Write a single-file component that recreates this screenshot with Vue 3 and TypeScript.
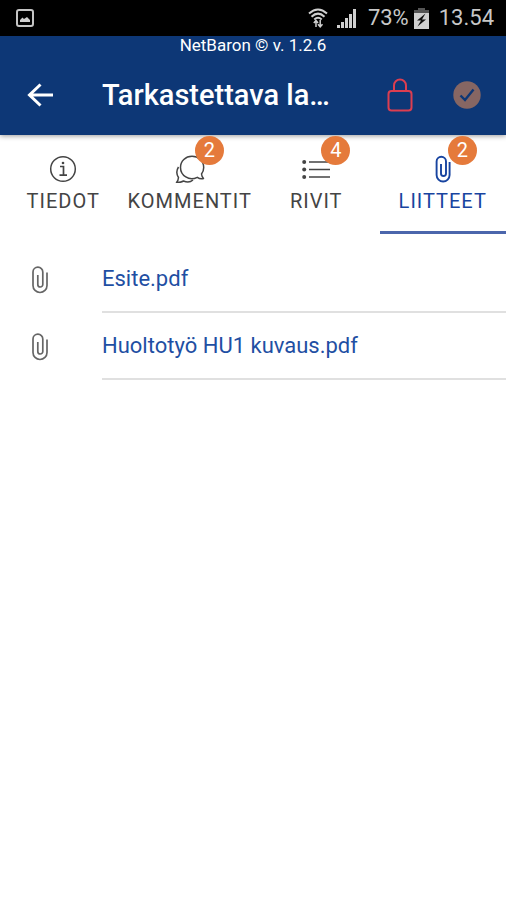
<script setup lang="ts">
import { ref } from 'vue'

type TabIcon = 'info' | 'chat' | 'list' | 'clip'

interface Tab {
  label: string
  icon: TabIcon
  count?: number
}

const tabs: Tab[] = [
  { label: 'Tiedot', icon: 'info' },
  { label: 'Kommentit', icon: 'chat', count: 2 },
  { label: 'Rivit', icon: 'list', count: 4 },
  { label: 'Liitteet', icon: 'clip', count: 2 },
]
const activeTab = ref<TabIcon>('clip')
const files: string[] = ['Esite.pdf', 'Huoltotyö HU1 kuvaus.pdf']
</script>

<template>
  <div class="screen">
    <div class="status">
      <svg class="picture" viewBox="0 0 18 18" aria-hidden="true">
        <rect x="1" y="1" width="16" height="16" rx="2" fill="none" stroke="#c4c4c4" stroke-width="2" />
        <path d="M4 13V11L6.500 8.500L8 10L11 8L14 11V13Z" fill="#d0d0d0" />
      </svg>
      <svg class="wifi" viewBox="0 0 20 20" aria-hidden="true">
        <g fill="none" stroke="#d0d0d0">
          <path d="M1 5.500Q10-2.500 19 5.500M3.500 8.700Q10 2.500 16.500 8.700M6.300 11.500Q10 8 13.700 11.500" stroke-width="2" />
          <path d="M8 19V12.500M5.800 15L8 12.500L10 15M12.200 12V18.500M10 16.200L12.200 18.800L14.500 16.200" stroke-width="1.500" />
        </g>
      </svg>
      <svg class="signal" viewBox="0 0 19 19" aria-hidden="true">
        <path d="M0 16h3v3H0zM4 13h3v6H4zM8 9h3v10H8zM12 5h3v14h-3zM16 0h3v19h-3z" fill="#d0d0d0" />
      </svg>
      <span>73%</span>
      <svg class="battery" viewBox="0 0 15 21" aria-hidden="true">
        <path d="M4 0h7v2h4v3H0V2h4z" fill="#555" />
        <path d="M0 5h15v16H0z" fill="#d0d0d0" />
        <path d="M11.500 5.500L3 12.500H7L3.500 18.500L12 11.500H8z" fill="#111" />
      </svg>
      <span>13.54</span>
    </div>

    <header class="header">
      <div class="version">NetBaron © v. 1.2.6</div>
      <div class="toolbar">
        <button class="back" type="button" aria-label="Takaisin">
          <svg viewBox="0 0 26 24" aria-hidden="true">
            <path d="M26 12H2.500M13.500 1.500L2.500 12L13.500 22.500" fill="none" stroke="#fff" stroke-width="3" />
          </svg>
        </button>
        <h1>Tarkastettava la…</h1>
        <button class="lock" type="button" aria-label="Lukitse">
          <svg viewBox="0 0 26 34" aria-hidden="true">
            <g fill="none" stroke="#dc3e50" stroke-width="2">
              <rect x="1.500" y="13" width="23" height="19.500" rx="3" />
              <path d="M7 13V7.500A6 6 0 0 1 19 7.500V13" />
            </g>
          </svg>
        </button>
        <button class="approve" type="button" aria-label="Hyväksy">
          <svg viewBox="0 0 28 28" aria-hidden="true">
            <circle cx="14" cy="14" r="13.700" fill="#866663" />
            <path d="M7.500 14.500L12 19L20.500 8.500" fill="none" stroke="#0d3776" stroke-width="2.400" />
          </svg>
        </button>
      </div>
    </header>

    <nav class="tabs" role="tablist">
      <button
        v-for="tab in tabs"
        :key="tab.icon"
        class="tab"
        :class="{ active: tab.icon === activeTab }"
        type="button"
        role="tab"
        :aria-selected="tab.icon === activeTab"
        @click="activeTab = tab.icon"
      >
        <span class="glyph">
          <svg v-if="tab.icon === 'info'" viewBox="0 0 30 28" aria-hidden="true">
            <circle cx="15" cy="14" r="12.300" fill="none" stroke="currentColor" stroke-width="1.500" />
            <path d="M12 11.500H15.500V20M11.500 20.200H19" fill="none" stroke="currentColor" stroke-width="1.700" />
            <circle cx="15" cy="8" r="1.300" fill="currentColor" />
          </svg>
          <svg v-else-if="tab.icon === 'chat'" viewBox="0 0 30 28" aria-hidden="true">
            <g fill="none" stroke="currentColor" stroke-width="1.500" stroke-linejoin="round">
              <path d="M28.500 23.500C26 24 24 23.500 22.300 22.300C14 26.500 5.500 20.500 5.500 12.500C5.500 6 10.500 1.300 17 1.300C23.500 1.300 28.700 6 28.700 12.500C28.700 15 27.700 17.500 26.500 19C26.700 21 27.500 22.500 28.500 23.500Z" />
              <path d="M3.500 12C1 16 1.500 19.500 3.500 22.500C3.300 25 2.500 26.500 1.500 27.500C4.500 27.700 6.500 27.200 8.500 26C12 27.500 15.500 27.200 18 25" />
            </g>
          </svg>
          <svg v-else-if="tab.icon === 'list'" viewBox="0 0 30 28" aria-hidden="true">
            <g fill="currentColor">
              <circle cx="3.200" cy="7" r="2" />
              <circle cx="3.200" cy="14.500" r="2" />
              <circle cx="3.200" cy="22" r="2" />
            </g>
            <path d="M8 7H29M8 14.500H29M8 22H29" stroke="currentColor" stroke-width="1.500" />
          </svg>
          <svg v-else viewBox="0 0 30 28" aria-hidden="true">
            <path
              d="M13 9V18.500a2.500 2.500 0 0 0 5 0V6.500a4.700 4.700 0 0 0 -9.400 0V20a6.500 6.500 0 0 0 13 0V7"
              fill="none"
              stroke="currentColor"
              stroke-width="1.900"
            />
          </svg>
          <span v-if="tab.count" class="badge">{{ tab.count }}</span>
        </span>
        <span class="label">{{ tab.label }}</span>
      </button>
    </nav>

    <ul class="files">
      <li v-for="file in files" :key="file">
        <svg viewBox="0 0 18 28" aria-hidden="true">
          <path
            d="M6.800 9V18.500a2.500 2.500 0 0 0 5 0V6a4.900 4.900 0 0 0 -9.800 0V19.500a7 7 0 0 0 14 0V6.500"
            fill="none"
            stroke="#666"
            stroke-width="1.700"
          />
        </svg>
        <a href="#">{{ file }}</a>
      </li>
    </ul>
  </div>
</template>

<style>
body {
  margin: 0;
  background: #fff;
}
</style>

<style scoped>
.screen {
  min-height: 100vh;
  background: #fff;
  font-family: Roboto, sans-serif;
}

svg {
  display: block;
  flex: none;
}

button {
  margin: 0;
  padding: 0;
  border: 0;
  background: none;
  font: inherit;
  color: inherit;
}

.status {
  display: flex;
  align-items: center;
  box-sizing: border-box;
  height: 36px;
  padding: 0 12px 0 16px;
  background: #000;
  color: #c8c8c8;
  font-size: 22px;
  line-height: 36px;
}

.picture {
  width: 18px;
  height: 18px;
  margin-right: auto;
}

.wifi {
  width: 20px;
  height: 20px;
  margin-right: 9px;
}

.signal {
  width: 19px;
  height: 19px;
  margin-right: 12px;
}

.battery {
  width: 15px;
  height: 21px;
  margin: 0 10px 0 5px;
}

.header {
  position: relative;
  background: #0d3776;
  color: #fff;
  box-shadow: 0 1px 5px rgba(0, 0, 0, 0.4);
}

.version {
  font-size: 17px;
  line-height: 19px;
  text-align: center;
}

.toolbar {
  display: flex;
  align-items: center;
  height: 80px;
  padding: 0 25px 0 27px;
}

.back svg {
  width: 26px;
  height: 24px;
}

h1 {
  flex: 1;
  min-width: 0;
  margin: 0 12px 0 49px;
  overflow: hidden;
  font-size: 29px;
  font-weight: 500;
  line-height: 36px;
  text-overflow: ellipsis;
  white-space: nowrap;
}

.lock {
  margin-right: 40px;
}

.lock svg {
  width: 26px;
  height: 34px;
}

.approve svg {
  width: 28px;
  height: 28px;
}

.tabs {
  display: grid;
  grid-template-columns: repeat(4, 1fr);
}

.tab {
  display: flex;
  flex-direction: column;
  align-items: center;
  height: 99px;
  padding-top: 20px;
  border-bottom: 3px solid transparent;
  color: #444;
}

.tab.active {
  border-color: #4b66ac;
  color: #1844a0;
}

.glyph {
  position: relative;
}

.glyph svg {
  width: 30px;
  height: 28px;
}

.badge {
  position: absolute;
  top: -19px;
  left: 20px;
  z-index: 1;
  width: 29px;
  height: 29px;
  border-radius: 50%;
  background: #e57a3b;
  color: #fff;
  font-size: 20px;
  line-height: 29px;
  text-align: center;
}

.label {
  margin-top: 6px;
  font-size: 20px;
  line-height: 24px;
  letter-spacing: 1px;
  text-transform: uppercase;
}

.files {
  margin: 0;
  padding: 12px 0 0;
  list-style: none;
}

.files li {
  display: flex;
  align-items: center;
  gap: 53px;
  padding-left: 31px;
}

.files svg {
  width: 18px;
  height: 28px;
}

.files a {
  flex: 1;
  border-bottom: 2px solid #e0e0e0;
  color: #1f4fa3;
  font-size: 22px;
  line-height: 65px;
  text-decoration: none;
}
</style>
